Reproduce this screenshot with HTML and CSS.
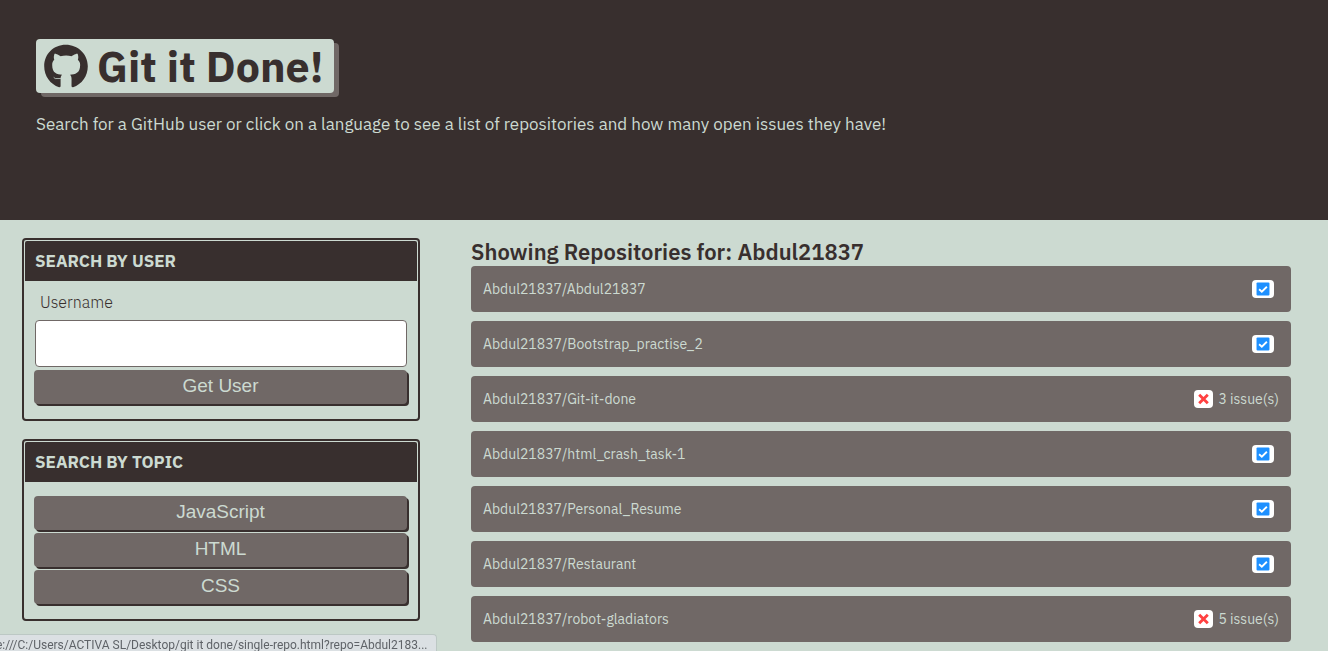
FILE: index.html
```html
<!DOCTYPE html>
<html lang="en">
<head>
<meta charset="utf-8">
<meta name="viewport" content="width=device-width, initial-scale=1">
<title>Git it Done!</title>
<link rel="stylesheet" href="styles.css">
</head>
<body>
<svg class="sprite" aria-hidden="true">
  <symbol id="check" viewBox="-.5 -.5 13 13">
    <rect width="12" height="12" rx="1" fill="#1e90ff"/>
    <path d="M2.4 6.2 4.900 8.500 9.600 3.900" fill="none" stroke="#fff" stroke-width="1.7"/>
  </symbol>
  <symbol id="cross" viewBox="-.5 -.5 13 13">
    <path d="M2 2 10 10M10 2 2 10" fill="none" stroke="#ff4040" stroke-width="2.6"/>
  </symbol>
</svg>

<header class="hero">
  <h1 class="app-title">
    <svg class="logo" viewBox="0 0 496 512" aria-hidden="true"><path fill="currentColor" d="M244.800 8C106.100 8 0 113.300 0 252c0 110.900 69.800 205.800 169.500 239.200 12.800 2.300 17.300-5.600 17.300-12.100 0-6.200-.3-40.400-.3-61.400l.6-35.100c2.300-16 8.800-27.100 16-33.700-55.900-6.200-112.300-14.300-112.300-110.500 0-27.500 7.600-41.300 23.600-58.900-2.600-6.500-11.100-33.300 2.600-67.900 20.900-6.500 69 27 69 27 20-5.600 41.500-8.500 62.800-8.500s42.800 2.900 62.800 8.500c0 0 48.100-33.600 69-27 13.700 34.700 5.200 61.400 2.600 67.900 16 17.700 25.800 31.500 25.800 58.900 0 96.500-58.900 104.200-114.800 110.500 9.200 7.900 17 22.900 17 46.400 0 33.700-.3 75.400-.3 83.600 0 6.500 4.600 14.400 17.300 12.100C428.200 457.800 496 362.900 496 252 496 113.300 383.500 8 244.800 8z"/><path class="logo-tail" d="M108 380 126 393H190"/></svg>
    <span>Git it Done!</span>
  </h1>
  <p class="tagline">Search for a GitHub user or click on a language to see a list of repositories and how many open issues they have!</p>
</header>

<main class="layout">
  <aside class="sidebar">
    <section class="card">
      <h2 class="card-title">Search by User</h2>
      <form class="card-body user-form">
        <label class="label" for="username">Username</label>
        <input class="field" id="username" type="text">
        <button class="btn" type="button">Get User</button>
      </form>
    </section>
    <section class="card">
      <h2 class="card-title">Search by Topic</h2>
      <div class="card-body topics">
        <button class="btn" type="button">JavaScript</button>
        <button class="btn" type="button">HTML</button>
        <button class="btn" type="button">CSS</button>
      </div>
    </section>
  </aside>

  <section class="results">
    <h2 class="results-title">Showing Repositories for: Abdul21837</h2>
    <div class="repo-list">
      <a class="repo" href="#"><span>Abdul21837/Abdul21837</span><span class="status"><svg class="badge badge-ok" role="img" aria-label="No open issues"><use href="#check"/></svg></span></a>
      <a class="repo" href="#"><span>Abdul21837/Bootstrap_practise_2</span><span class="status"><svg class="badge badge-ok" role="img" aria-label="No open issues"><use href="#check"/></svg></span></a>
      <a class="repo" href="#"><span>Abdul21837/Git-it-done</span><span class="status"><svg class="badge" aria-hidden="true"><use href="#cross"/></svg>3 issue(s)</span></a>
      <a class="repo" href="#"><span>Abdul21837/html_crash_task-1</span><span class="status"><svg class="badge badge-ok" role="img" aria-label="No open issues"><use href="#check"/></svg></span></a>
      <a class="repo" href="#"><span>Abdul21837/Personal_Resume</span><span class="status"><svg class="badge badge-ok" role="img" aria-label="No open issues"><use href="#check"/></svg></span></a>
      <a class="repo" href="#"><span>Abdul21837/Restaurant</span><span class="status"><svg class="badge badge-ok" role="img" aria-label="No open issues"><use href="#check"/></svg></span></a>
      <a class="repo" href="#"><span>Abdul21837/robot-gladiators</span><span class="status"><svg class="badge" aria-hidden="true"><use href="#cross"/></svg>5 issue(s)</span></a>
    </div>
  </section>
</main>

<div class="link-status">e:///C:/Users/ACTIVA SL/Desktop/git it done/single-repo.html?repo=Abdul2183...</div>
</body>
</html>
```
FILE: styles.css
```css
:root {
  --dark: #382f2e;
  --mid: #706866;
  --light: #ccdad1;
}

* {
  box-sizing: border-box;
}

body {
  margin: 0;
  background: var(--light);
  color: var(--dark);
  font-family: "IBM Plex Sans", Inter, sans-serif;
  font-size: 16px;
}

h1, h2, p {
  margin: 0;
}

.sprite {
  display: none;
}

.hero {
  min-height: 220px;
  padding: 39px 36px;
  background: var(--dark);
  color: var(--light);
}

.app-title {
  display: inline-flex;
  align-items: center;
  gap: 9px;
  padding: 0 10px 0 8px;
  border-radius: 4px;
  background: var(--light);
  box-shadow: 5px 4px 0 var(--mid);
  color: var(--dark);
  font-size: 43px;
  font-weight: 700;
  line-height: 54px;
}

.logo {
  width: 44px;
  height: 45px;
}

.logo-tail {
  fill: none;
  stroke: var(--light);
  stroke-width: 9;
}

.tagline {
  margin-top: 18px;
  font-size: 17px;
  line-height: 26px;
}

.layout {
  display: grid;
  grid-template-columns: 398fr 820fr;
  gap: 51px;
  padding: 18px 37px 20px 22px;
}

.sidebar {
  display: flex;
  flex-direction: column;
  gap: 18px;
}

.card {
  padding: 1px;
  border: 2px solid var(--dark);
  border-radius: 4px;
}

.card-title {
  padding: 0 10px;
  border-radius: 2px 2px 0 0;
  background: var(--dark);
  color: var(--light);
  font-size: 17px;
  font-weight: 700;
  line-height: 40px;
  text-transform: uppercase;
}

.card-body {
  display: flex;
  flex-direction: column;
  gap: 3px;
  padding: 14px 10px;
}

.user-form {
  padding-top: 9px;
}

.label {
  padding: 0 5px;
  margin-bottom: 3px;
  font-size: 16px;
  font-weight: 300;
  line-height: 24px;
}

.field {
  height: 47px;
  padding: 8px;
  border: 1px solid var(--mid);
  border-radius: 4px;
  background: #fff;
  font-size: 16px;
}

.btn {
  height: 34px;
  margin: 0 0 0 -1px;
  padding: 0 0 2px;
  border: 0;
  border-radius: 4px;
  background: var(--mid);
  box-shadow: 2px 2px 0 var(--dark);
  color: var(--light);
  font-family: "Liberation Sans", Arial, sans-serif;
  font-size: 19px;
}

.results-title {
  font-size: 22px;
  font-weight: 600;
  line-height: 28px;
}

.repo-list {
  display: flex;
  flex-direction: column;
  gap: 9px;
}

.repo {
  display: flex;
  justify-content: space-between;
  align-items: center;
  padding: 12px;
  border-radius: 4px;
  background: var(--mid);
  color: var(--light);
  font-size: 14px;
  line-height: 22px;
  text-decoration: none;
}

.status {
  display: flex;
  align-items: center;
  gap: 5px;
}

.badge {
  width: 19px;
  height: 18px;
  padding: 2px;
  border-radius: 4px;
  background: #fff;
}

.badge-ok {
  width: 22px;
  margin-right: 5px;
}

.link-status {
  position: fixed;
  bottom: 0;
  left: 0;
  height: 17px;
  padding-right: 9px;
  border: 1px solid #bcc8c4;
  border-width: 1px 1px 0 0;
  border-radius: 0 4px 0 0;
  background: #dbe0e3;
  color: #5f6368;
  font-family: "Segoe UI", Roboto, sans-serif;
  font-size: 12px;
  line-height: 20px;
  text-indent: -4px;
  white-space: nowrap;
}
```
